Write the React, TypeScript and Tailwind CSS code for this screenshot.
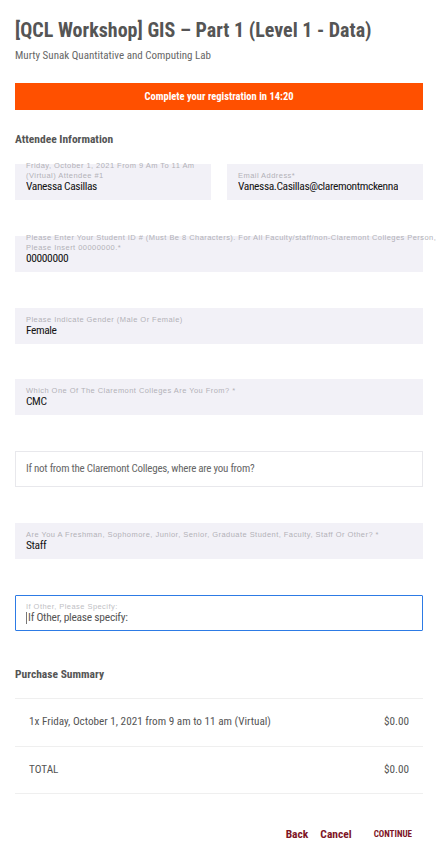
const baseFont = "font-['Roboto','Liberation_Sans',sans-serif] [font-stretch:75%]";
const labelFont = "font-['Liberation_Sans',Arial,sans-serif] [font-stretch:normal]";

type FieldProps = {
  label: React.ReactNode;
  value: string;
  className?: string;
};

function FilledField({ label, value, className = "" }: FieldProps) {
  return (
    <div className={`flex h-[36px] flex-col justify-end bg-[#f2f1f7] pb-[7px] pl-[11px] ${className}`}>
      <div className={`${labelFont} whitespace-nowrap text-[7.5px] leading-[9.5px] tracking-[0.45px] text-[#b2b2b8]`}>
        {label}
      </div>
      <div className="overflow-x-clip whitespace-nowrap text-[11.5px] leading-[13px] tracking-[-0.4px] text-[#141414]">
        {value}
      </div>
    </div>
  );
}

export default function App() {
  return (
    <div className={`${baseFont} min-h-[864px] w-full overflow-hidden bg-white pl-[15px] pr-[21px] pt-[18px] text-[#555]`}>
      <h1 className="text-[20px] font-bold leading-[24px] text-[#555]">
        [QCL Workshop] GIS – Part 1 (Level 1 - Data)
      </h1>
      <p className="mt-[7px] text-[11px] leading-[14px] text-[#666]">
        Murty Sunak Quantitative and Computing Lab
      </p>

      <div className="mt-[20px] flex h-[27px] items-center justify-center bg-[#ff5000] text-[10.5px] font-bold text-white">
        Complete your registration in 14:20
      </div>

      <h2 className="mt-[22px] text-[11.5px] font-bold leading-[14px] text-[#555]">Attendee Information</h2>

      <div className="mt-[18px] grid grid-cols-2 gap-[16px]">
        <FilledField
          label={
            <>
              Friday, October 1, 2021 From 9 Am To 11 Am
              <br />
              (Virtual) Attendee #1
            </>
          }
          value="Vanessa Casillas"
        />
        <FilledField label="Email Address*" value="Vanessa.Casillas@claremontmckenna.edu" className="pr-[25px]" />
      </div>

      <FilledField
        className="mt-[36px]"
        label={
          <>
            Please Enter Your Student ID # (Must Be 8 Characters). For All Faculty/staff/non-Claremont Colleges Person,
            <br />
            Please Insert 00000000.*
          </>
        }
        value="00000000"
      />

      <FilledField className="mt-[36px]" label="Please Indicate Gender (Male Or Female)" value="Female" />

      <FilledField className="mt-[35px]" label="Which One Of The Claremont Colleges Are You From? *" value="CMC" />

      <div className="mt-[36px] flex h-[36px] items-center border border-[#e8e8ec] bg-white pl-[10px] text-[11px] tracking-[-0.25px] text-[#666]">
        If not from the Claremont Colleges, where are you from?
      </div>

      <FilledField
        className="mt-[36px]"
        label="Are You A Freshman, Sophomore, Junior, Senior, Graduate Student, Faculty, Staff Or Other? *"
        value="Staff"
      />

      <div className="mt-[36px] flex h-[36px] flex-col justify-end rounded-[1px] border-[1.5px] border-[#2d7be5] bg-white pb-[6px] pl-[10px]">
        <div className={`${labelFont} whitespace-nowrap text-[7.5px] leading-[9.5px] tracking-[0.45px] text-[#c0c0c4]`}>
          If Other, Please Specify:
        </div>
        <div className="flex items-center text-[11.5px] leading-[13px] tracking-[-0.25px] text-[#555]">
          <span className="mr-[1px] inline-block h-[12px] w-[1px] bg-[#777]" />
          If Other, please specify:
        </div>
      </div>

      <h2 className="mt-[36px] text-[11.5px] font-bold leading-[14px] text-[#555]">Purchase Summary</h2>

      <div className="mt-[17px] border-t border-[#efefef]">
        <div className="flex h-[48px] items-center justify-between border-b border-[#efefef] px-[14px] text-[11.2px] text-[#555]">
          <span>1x Friday, October 1, 2021 from 9 am to 11 am (Virtual)</span>
          <span>$0.00</span>
        </div>
        <div className="flex h-[47px] items-center justify-between border-b border-[#efefef] px-[14px] text-[11.2px] text-[#555]">
          <span>TOTAL</span>
          <span>$0.00</span>
        </div>
      </div>

      <div className="mt-[32px] flex items-center justify-end pr-[11px] font-bold text-[#7e1527]">
        <button className="text-[11.5px] leading-[16px]">Back</button>
        <button className="ml-[12px] text-[11.5px] leading-[16px]">Cancel</button>
        <button className="ml-[22px] text-[9px] leading-[16px]">CONTINUE</button>
      </div>
    </div>
  );
}
